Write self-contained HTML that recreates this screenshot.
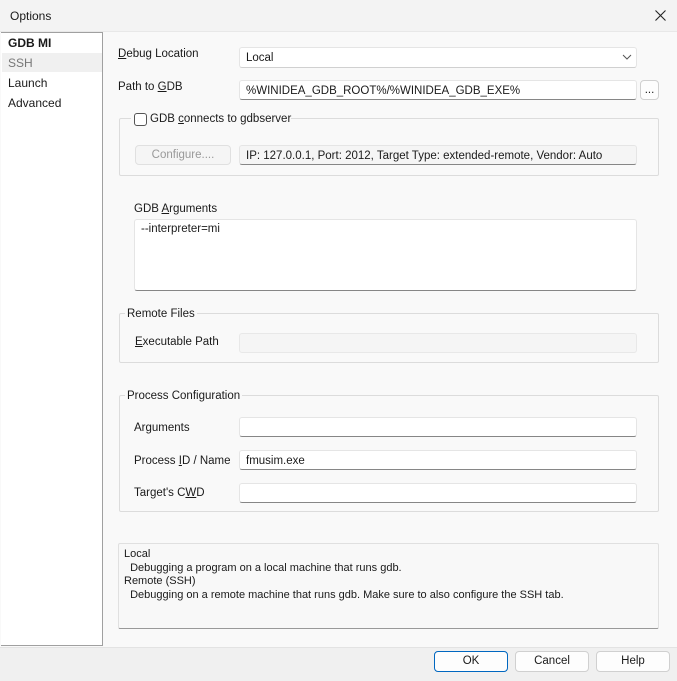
<!DOCTYPE html>
<html><head><style>
*{box-sizing:border-box;margin:0;padding:0}
body{width:677px;height:681px;position:relative;background:#f3f3f3;font-family:"Liberation Sans",sans-serif;font-size:11.5px;color:#1a1a1a;overflow:hidden}
.a{position:absolute;white-space:nowrap}
.inp{position:absolute;background:#fff;border:1px solid #e5e5e5;border-bottom:1px solid #868686;border-radius:3px;padding:3px 6px;line-height:12px}
.grp{position:absolute;border:1px solid #dcdcdc;border-radius:2px}
.lg{position:absolute;background:#f9f9f9;padding:0 2px}
.btn{position:absolute;background:#fdfdfd;border:1px solid #d0d0d0;border-radius:4px;text-align:center;line-height:18px}
u{text-decoration:underline}
</style></head><body>
<div class="a" style="left:0;top:0;width:677px;height:32px;background:#f3f3f3;border-bottom:1px solid #e8e8e8"></div>
<div class="a" style="left:10px;top:9px;font-size:12px">Options</div>
<svg class="a" style="left:655px;top:10px" width="11" height="11"><path d="M0.5 0.5L10.5 10.5M10.5 0.5L0.5 10.5" stroke="#222" stroke-width="1.1"/></svg>
<div class="a" style="left:0;top:32px;width:677px;height:615px;background:#f9f9f9"></div>
<div class="a" style="left:1px;top:32px;width:102px;height:614px;background:#fff;border:1px solid #a0a0a0;border-left:none"></div>
<div class="a" style="left:2px;top:53px;width:100px;height:19px;background:#f0f0f0"></div>
<div class="a" style="left:8px;top:36px;font-weight:bold;font-size:12px">GDB MI</div>
<div class="a" style="left:8px;top:56px;color:#777;font-size:12px">SSH</div>
<div class="a" style="left:8px;top:76px;font-size:12px">Launch</div>
<div class="a" style="left:8px;top:96px;font-size:12px">Advanced</div>

<div class="a" style="left:118px;top:48px"><u>D</u>ebug Location</div>
<div class="inp" style="left:239px;top:47px;width:398px;height:21px;border-bottom-color:#d0d0d0;padding-top:4px">Local</div>
<svg class="a" style="left:622px;top:54px" width="10" height="6"><path d="M1 1L5 5L9 1" fill="none" stroke="#555"/></svg>
<div class="a" style="left:118px;top:81px">Path to <u>G</u>DB</div>
<div class="inp" style="left:239px;top:80px;width:398px;height:20px;padding-top:4px">%WINIDEA_GDB_ROOT%/%WINIDEA_GDB_EXE%</div>
<div class="btn" style="left:640px;top:80px;width:19px;height:20px;line-height:18px">...</div>

<div class="grp" style="left:119px;top:118px;width:540px;height:58px"></div>
<div class="lg" style="left:131px;top:111px;height:14px;width:160px"></div>
<div class="a" style="left:134px;top:113px;width:13px;height:13px;border:1px solid #555;border-radius:3px;background:#fff"></div>
<div class="a" style="left:150px;top:113px">GDB <u>c</u>onnects to gdbserver</div>
<div class="btn" style="left:135px;top:145px;width:96px;height:20px;color:#999;background:#f5f5f5;border-color:#e0e0e0">Configure....</div>
<div class="inp" style="left:239px;top:145px;width:398px;height:20px;background:#f5f5f5;padding-top:4px">IP: 127.0.0.1, Port: 2012, Target Type: extended-remote, Vendor: Auto</div>

<div class="a" style="left:134px;top:203px">GDB <u>A</u>rguments</div>
<div class="inp" style="left:134px;top:219px;width:503px;height:72px">--interpreter=mi</div>

<div class="grp" style="left:119px;top:313px;width:540px;height:50px"></div>
<div class="lg a" style="left:125px;top:308px">Remote Files</div>
<div class="a" style="left:135px;top:336px"><u>E</u>xecutable Path</div>
<div class="inp" style="left:239px;top:333px;width:398px;height:20px;background:#f5f5f5;border-color:#e8e8e8"></div>

<div class="grp" style="left:119px;top:395px;width:540px;height:117px"></div>
<div class="lg a" style="left:125px;top:390px">Process Configuration</div>
<div class="a" style="left:134px;top:422px">Ar<u>g</u>uments</div>
<div class="inp" style="left:239px;top:417px;width:398px;height:20px"></div>
<div class="a" style="left:134px;top:455px">Process <u>I</u>D / Name</div>
<div class="inp" style="left:239px;top:450px;width:398px;height:20px;padding-top:4px">fmusim.exe</div>
<div class="a" style="left:134px;top:487px">Target's C<u>W</u>D</div>
<div class="inp" style="left:239px;top:483px;width:398px;height:20px"></div>

<div class="a" style="left:118px;top:543px;width:541px;height:86px;background:#f8f8f8;border:1px solid #e0e0e0;border-bottom:1px solid #999;border-radius:2px;padding:4px 5px;line-height:13.5px;font-size:11px">Local<br>&nbsp;&nbsp;Debugging a program on a local machine that runs gdb.<br>Remote (SSH)<br>&nbsp;&nbsp;Debugging on a remote machine that runs gdb. Make sure to also configure the SSH tab.</div>

<div class="a" style="left:0;top:647px;width:677px;height:34px;background:#f0f0f0;border-top:1px solid #e3e3e3"></div>
<div class="btn" style="left:434px;top:651px;width:74px;height:21px;border:1px solid #0067c0">OK</div>
<div class="btn" style="left:515px;top:651px;width:74px;height:21px">Cancel</div>
<div class="btn" style="left:596px;top:651px;width:74px;height:21px">Help</div>
</body></html>
